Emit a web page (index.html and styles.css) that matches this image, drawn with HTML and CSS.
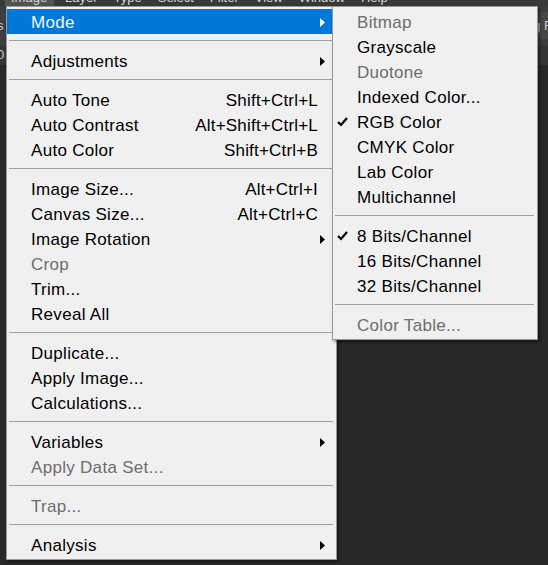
FILE: index.html
```html
<!DOCTYPE html>
<html>
<head>
<meta charset="utf-8">
<link rel="stylesheet" href="styles.css">
</head>
<body>
<div class="app">
  <div class="menubar">
    <span class="mb-item active">Image</span>
    <span class="mb-item">Layer</span>
    <span class="mb-item">Type</span>
    <span class="mb-item">Select</span>
    <span class="mb-item">Filter</span>
    <span class="mb-item">View</span>
    <span class="mb-item">Window</span>
    <span class="mb-item">Help</span>
  </div>
  <div class="optionsbar">
    <span class="opt-left">s</span>
    <span class="opt-right"><span class="opt-box"></span>g F</span>
  </div>
  <div class="tabbar"><span class="tab-left">0</span></div>
  <div class="workspace"></div>

  <div class="menu main">
    <div class="row hl"><span class="label">Mode</span><span class="sc"></span><span class="arr"><svg width="5" height="9" viewBox="0 0 5 9"><polygon points="0,0 5,4.5 0,9" fill="#fff"/></svg></span></div>
    <div class="sep"></div>
    <div class="row"><span class="label">Adjustments</span><span class="sc"></span><span class="arr"><svg width="5" height="9" viewBox="0 0 5 9"><polygon points="0,0 5,4.5 0,9"/></svg></span></div>
    <div class="sep"></div>
    <div class="row"><span class="label">Auto Tone</span><span class="sc">Shift+Ctrl+L</span><span class="arr"></span></div>
    <div class="row"><span class="label">Auto Contrast</span><span class="sc">Alt+Shift+Ctrl+L</span><span class="arr"></span></div>
    <div class="row"><span class="label">Auto Color</span><span class="sc">Shift+Ctrl+B</span><span class="arr"></span></div>
    <div class="sep"></div>
    <div class="row"><span class="label">Image Size...</span><span class="sc">Alt+Ctrl+I</span><span class="arr"></span></div>
    <div class="row"><span class="label">Canvas Size...</span><span class="sc">Alt+Ctrl+C</span><span class="arr"></span></div>
    <div class="row"><span class="label">Image Rotation</span><span class="sc"></span><span class="arr"><svg width="5" height="9" viewBox="0 0 5 9"><polygon points="0,0 5,4.5 0,9"/></svg></span></div>
    <div class="row dis"><span class="label">Crop</span><span class="sc"></span><span class="arr"></span></div>
    <div class="row"><span class="label">Trim...</span><span class="sc"></span><span class="arr"></span></div>
    <div class="row"><span class="label">Reveal All</span><span class="sc"></span><span class="arr"></span></div>
    <div class="sep"></div>
    <div class="row"><span class="label">Duplicate...</span><span class="sc"></span><span class="arr"></span></div>
    <div class="row"><span class="label">Apply Image...</span><span class="sc"></span><span class="arr"></span></div>
    <div class="row"><span class="label">Calculations...</span><span class="sc"></span><span class="arr"></span></div>
    <div class="sep"></div>
    <div class="row"><span class="label">Variables</span><span class="sc"></span><span class="arr"><svg width="5" height="9" viewBox="0 0 5 9"><polygon points="0,0 5,4.5 0,9"/></svg></span></div>
    <div class="row dis"><span class="label">Apply Data Set...</span><span class="sc"></span><span class="arr"></span></div>
    <div class="sep"></div>
    <div class="row dis"><span class="label">Trap...</span><span class="sc"></span><span class="arr"></span></div>
    <div class="sep"></div>
    <div class="row"><span class="label">Analysis</span><span class="sc"></span><span class="arr"><svg width="5" height="9" viewBox="0 0 5 9"><polygon points="0,0 5,4.5 0,9"/></svg></span></div>
  </div>

  <div class="menu sub">
    <div class="row dis"><span class="chk"></span><span class="label">Bitmap</span></div>
    <div class="row"><span class="chk"></span><span class="label">Grayscale</span></div>
    <div class="row dis"><span class="chk"></span><span class="label">Duotone</span></div>
    <div class="row"><span class="chk"></span><span class="label">Indexed Color...</span></div>
    <div class="row"><span class="chk"><svg width="11" height="10" viewBox="0 0 11 10"><polyline points="1,5 4,8 10,1" fill="none" stroke="#000" stroke-width="2.2"/></svg></span><span class="label">RGB Color</span></div>
    <div class="row"><span class="chk"></span><span class="label">CMYK Color</span></div>
    <div class="row"><span class="chk"></span><span class="label">Lab Color</span></div>
    <div class="row"><span class="chk"></span><span class="label">Multichannel</span></div>
    <div class="sep"></div>
    <div class="row"><span class="chk"><svg width="11" height="10" viewBox="0 0 11 10"><polyline points="1,5 4,8 10,1" fill="none" stroke="#000" stroke-width="2.2"/></svg></span><span class="label">8 Bits/Channel</span></div>
    <div class="row"><span class="chk"></span><span class="label">16 Bits/Channel</span></div>
    <div class="row"><span class="chk"></span><span class="label">32 Bits/Channel</span></div>
    <div class="sep"></div>
    <div class="row dis"><span class="chk"></span><span class="label">Color Table...</span></div>
  </div>
</div>
</body>
</html>
```
FILE: styles.css
```css
html, body {
  margin: 0;
  padding: 0;
}
body {
  width: 548px;
  height: 565px;
  overflow: hidden;
  background: #282828;
  font-family: "Liberation Sans", Arial, sans-serif;
}
.app {
  position: relative;
  width: 548px;
  height: 565px;
  display: flex;
  flex-direction: column;
}
.menubar {
  height: 6px;
  background: #383838;
  display: flex;
  overflow: hidden;
  padding-left: 5px;
}
.mb-item {
  display: block;
  color: #d6d6d6;
  font-size: 13px;
  line-height: 14px;
  margin-top: -9px;
  height: 15px;
  padding: 0 7px 0 6px;
  margin-right: 3px;
}
.mb-item:nth-child(2) { padding-left: 8px; }
.mb-item.active {
  background: #535353;
  width: 36px;
}
.optionsbar {
  height: 39px;
  background: #3d3d3d;
  display: flex;
  justify-content: space-between;
  align-items: center;
  color: #d0d0d0;
  font-size: 13px;
}
.opt-left { margin-left: -3px; }
.opt-right {
  display: flex;
  align-items: center;
  gap: 2px;
  margin-right: -4px;
  background: #474747;
  padding: 6px 0 6px 4px;
}
.opt-box {
  width: 6px;
  height: 12px;
  border: 1px solid #9a9a9a;
}
.tabbar {
  height: 20px;
  background: #353535;
  color: #cfcfcf;
  font-size: 13px;
  line-height: 20px;
}
.tab-left { margin-left: -3px; }
.workspace {
  flex: 1;
  background: #282828;
}

.menu {
  position: absolute;
  top: 6px;
  background: #f0f0f0;
  border: 1px solid #979797;
  padding: 2px 0;
  box-shadow: 2px 2px 3px rgba(0, 0, 0, 0.45);
  font-size: 17px;
  letter-spacing: 0.3px;
  color: #000;
}
.main {
  left: 6px;
  width: 329px;
}
.sub {
  left: 332px;
  width: 204px;
}
.row {
  height: 25px;
  box-sizing: border-box;
  padding-top: 3px;
  line-height: 22px;
  display: flex;
  align-items: center;
  white-space: nowrap;
}
.main .row {
  padding-left: 24px;
}
.row .label {
  flex: 1;
}
.row .sc {
  text-align: right;
  letter-spacing: 0.2px;
}
.row .arr {
  width: 18px;
  box-sizing: border-box;
  display: flex;
  align-items: center;
  justify-content: flex-start;
  padding-left: 2px;
  margin-top: -2px;
  flex: none;
}
.row .arr svg { display: block; }
.hl {
  background: #0078d7;
  color: #f2f7ff;
}
.dis {
  color: #6d6d6d;
}
.sep {
  height: 1px;
  background: #a0a0a0;
  margin: 6px 3px 7px 2px;
}
.sub .chk {
  width: 24px;
  flex: none;
  display: flex;
  align-items: center;
  padding-left: 4px;
  margin-top: -2px;
  box-sizing: border-box;
}
.sub .chk svg { display: block; }
```
